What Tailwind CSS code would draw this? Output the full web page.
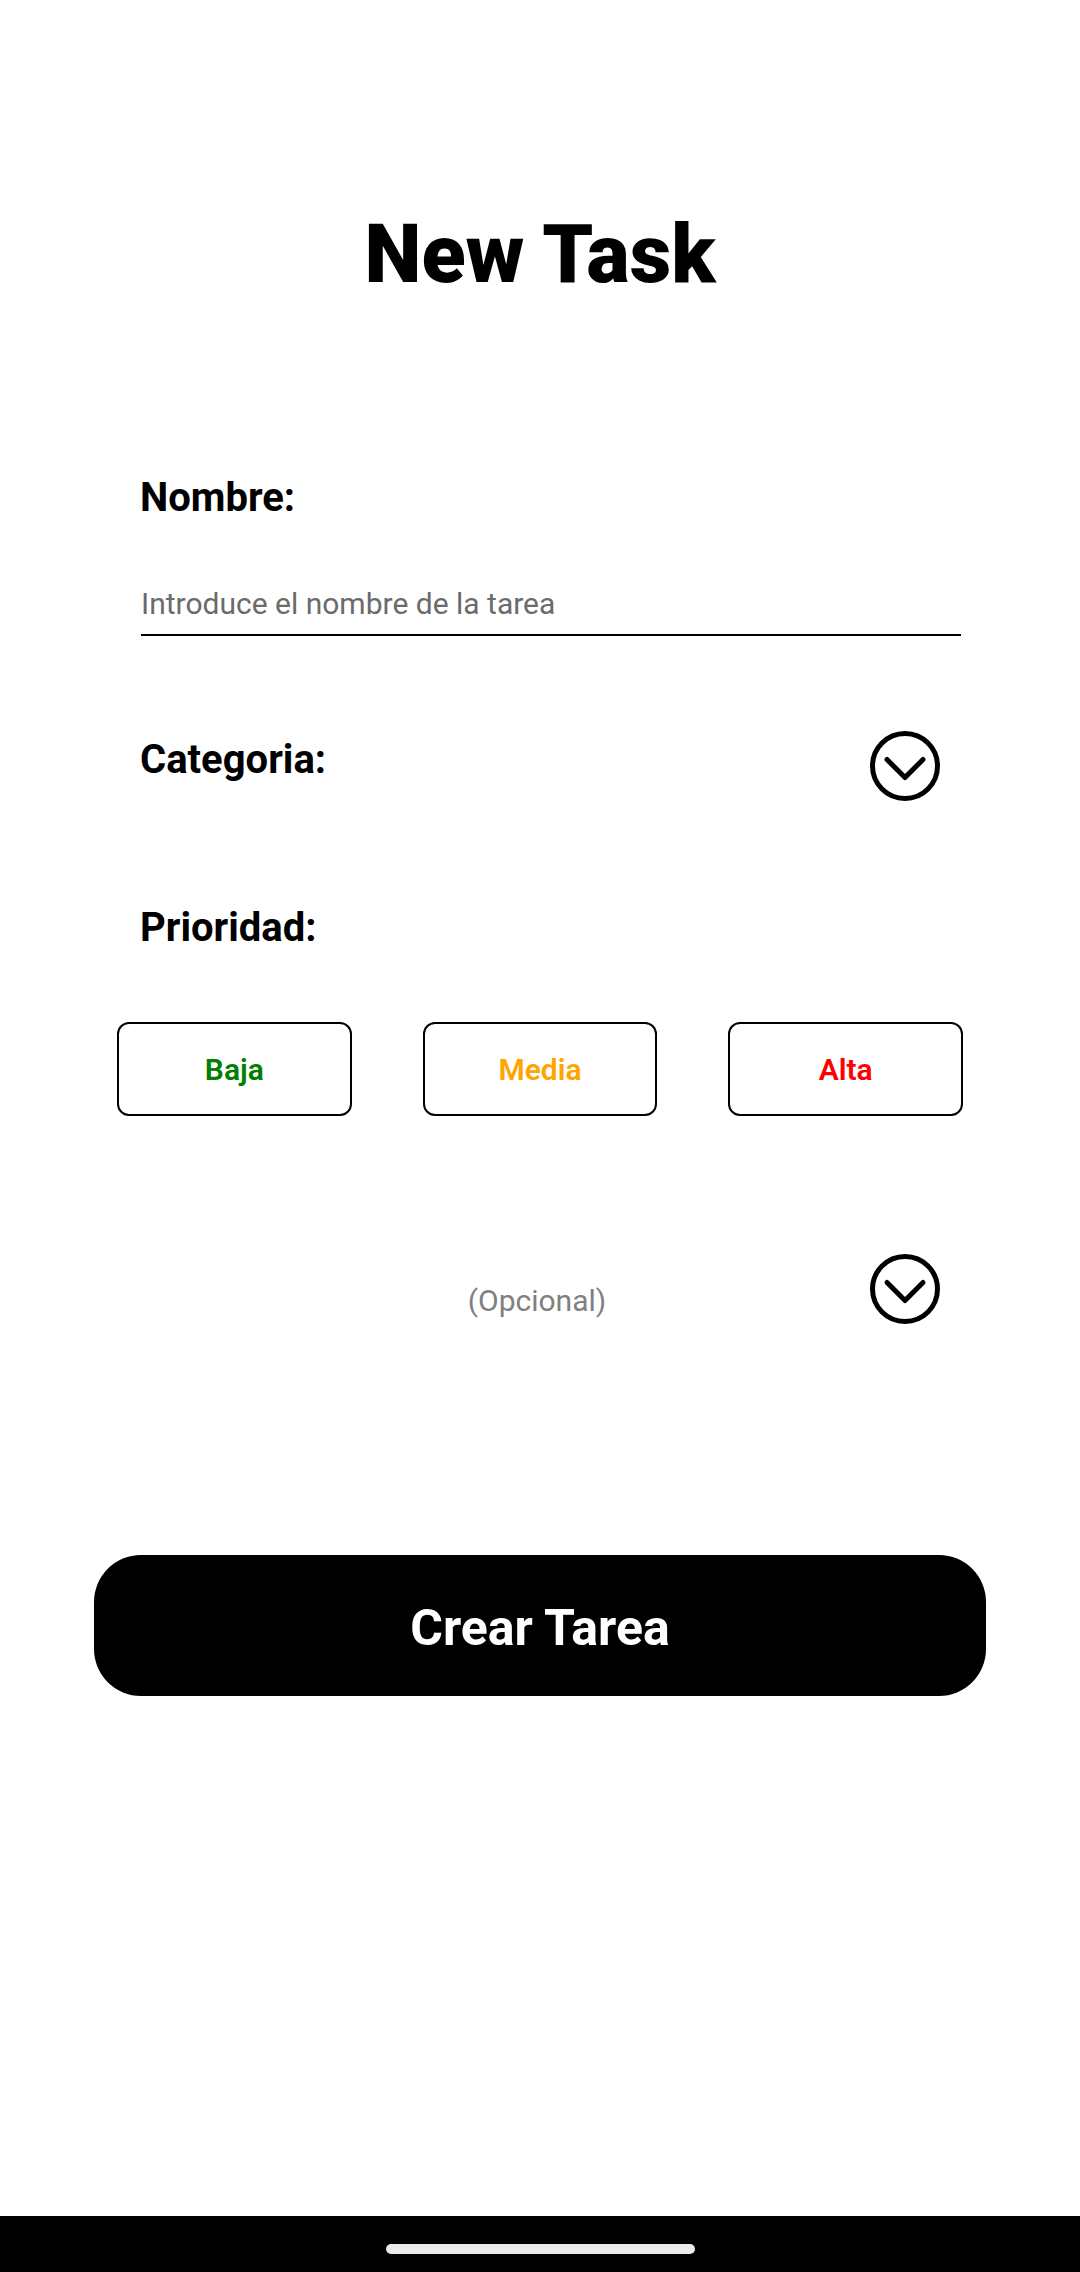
<!DOCTYPE html>
<html lang="es">
<head>
<meta charset="utf-8">
<meta name="viewport" content="width=device-width, initial-scale=1">
<title>New Task</title>
<script src="https://cdn.jsdelivr.net/npm/@tailwindcss/browser@4"></script>
</head>
<body class="flex min-h-screen flex-col bg-white font-['Roboto',sans-serif] text-black">
<main class="flex-1 pt-[215px]">
  <h1 class="text-center text-[81px] leading-[80px] font-black">New Task</h1>
  <form class="mt-[179px]">
    <div class="pr-[119px] pl-[140px]">
      <label for="nombre" class="block text-[40px] leading-[48px] font-bold">Nombre:</label>
      <div class="mt-[62px] pl-px">
        <input id="nombre" type="text" placeholder="Introduce el nombre de la tarea" class="block h-[52px] w-full border-b-2 border-black pb-3 text-[30px] leading-[38px] outline-none placeholder:text-[#6b6b6b]">
      </div>
    </div>
    <div class="mt-[95px] flex items-start justify-between pr-[140px] pl-[140px]">
      <span class="mt-[5px] text-[40px] leading-[48px] font-bold">Categoria:</span>
      <button type="button" aria-label="Elegir categoria" class="size-[70px]">
        <svg viewBox="0 0 70 70" class="size-full" fill="none" stroke="#000" stroke-width="5" stroke-linecap="round" stroke-linejoin="round"><circle cx="35" cy="35" r="32.5"/><path d="M17 28.500 35 46.500 53 28.500"/></svg>
      </button>
    </div>
    <fieldset class="mt-[103px]">
      <legend class="pl-[140px] text-[40px] leading-[48px] font-bold">Prioridad:</legend>
      <div class="mt-[70px] grid grid-cols-3 gap-[71px] px-[117px] text-[30px] leading-[40px] font-semibold">
        <button type="button" class="h-[94px] rounded-xl border-2 border-black pt-[2px] text-[#008000]">Baja</button>
        <button type="button" class="h-[94px] rounded-xl border-2 border-black pt-[2px] text-[#ffa500]">Media</button>
        <button type="button" class="h-[94px] rounded-xl border-2 border-black pt-[2px] text-[#ff0000]">Alta</button>
      </div>
    </fieldset>
    <div class="mt-[138px] grid grid-cols-[1fr_auto_1fr] items-end pr-[140px] pl-[134px]">
      <span class="col-start-2 pb-[3px] text-[30px] leading-[40px] text-[#808080]">(Opcional)</span>
      <button type="button" aria-label="Mostrar opcional" class="size-[70px] justify-self-end">
        <svg viewBox="0 0 70 70" class="size-full" fill="none" stroke="#000" stroke-width="5" stroke-linecap="round" stroke-linejoin="round"><circle cx="35" cy="35" r="32.5"/><path d="M17 28.500 35 46.500 53 28.500"/></svg>
      </button>
    </div>
    <div class="mt-[231px] px-[94px]">
      <button type="submit" class="h-[141px] w-full rounded-[47px] bg-black pt-1 text-[50px] leading-[60px] font-bold text-white">Crear Tarea</button>
    </div>
  </form>
</main>
<footer class="flex h-14 items-center justify-center bg-black pt-[9px]">
  <div class="h-[10px] w-[309px] rounded-full bg-[#ebebeb]"></div>
</footer>
</body>
</html>
